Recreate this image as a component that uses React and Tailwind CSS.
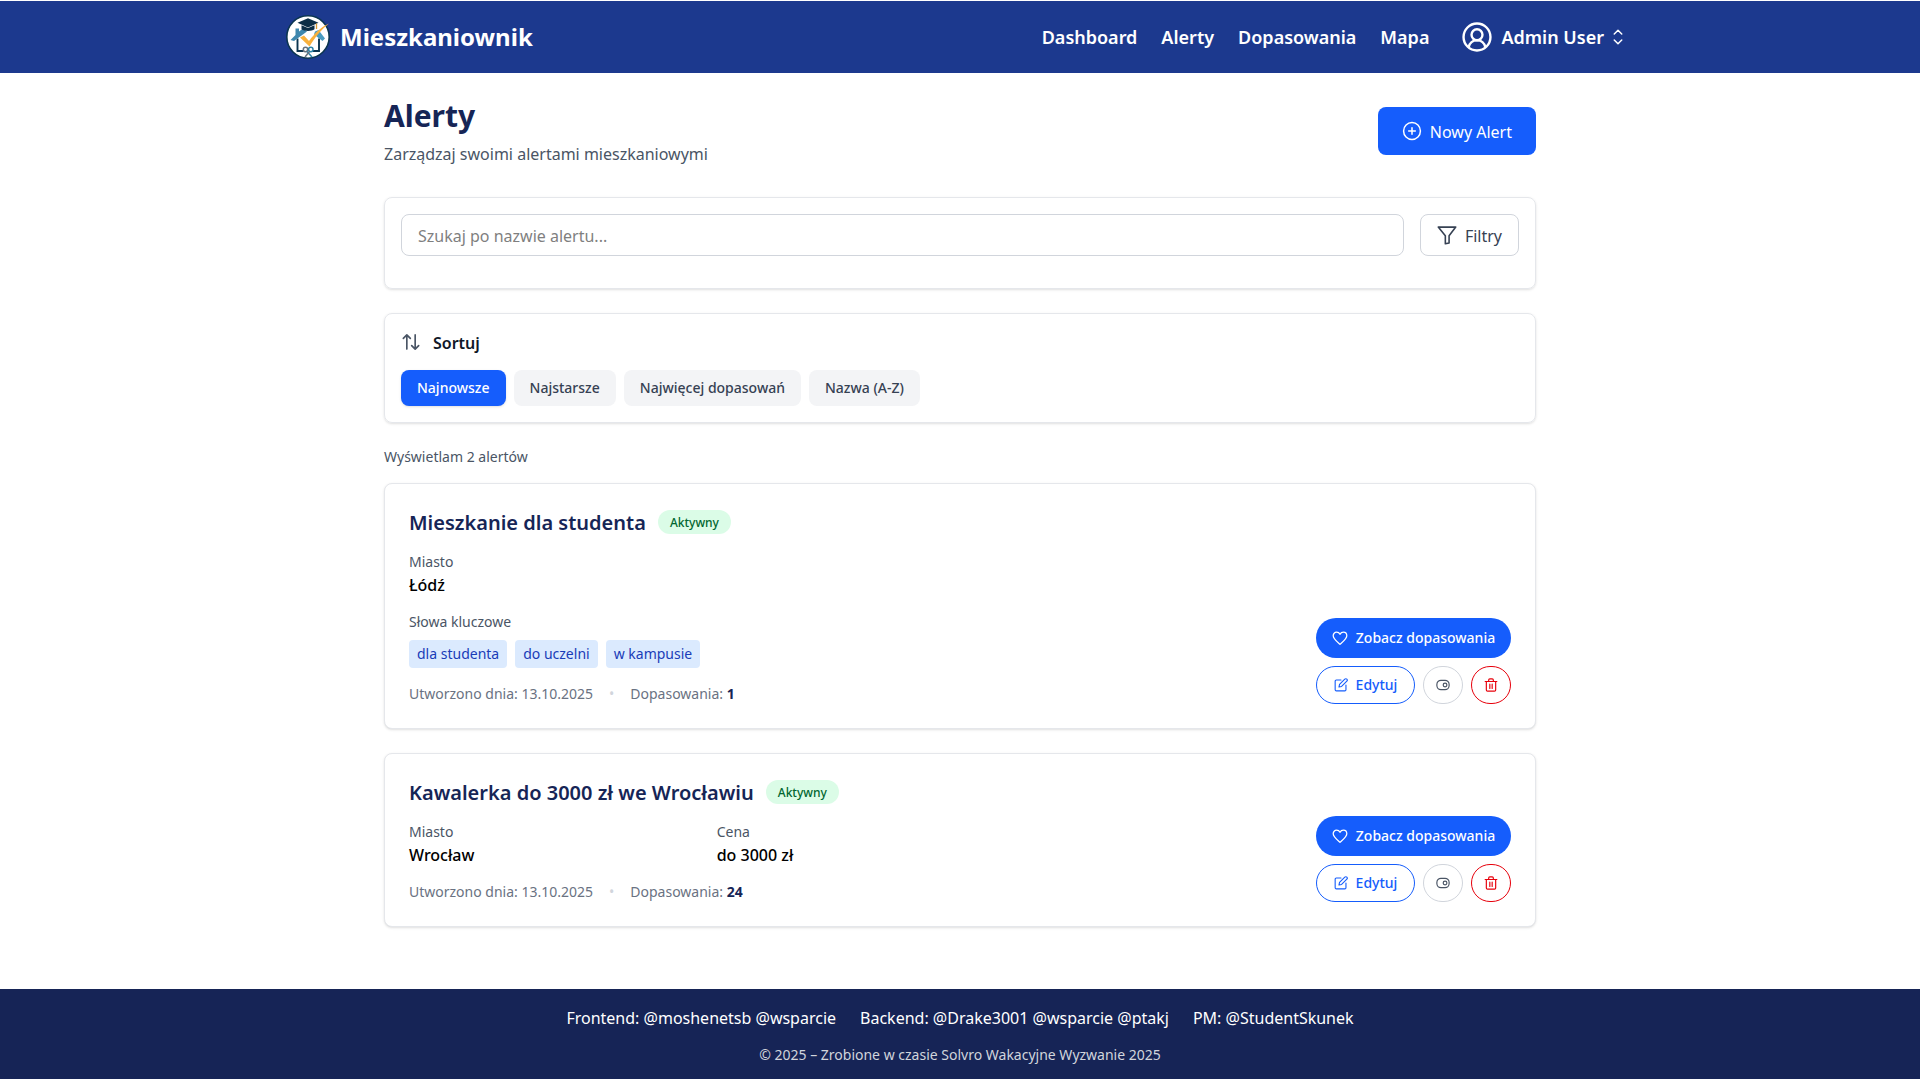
import React from "react";

function Svg({ className, sw = 2, children }) {
  return (
    <svg viewBox="0 0 24 24" fill="none" stroke="currentColor" strokeWidth={sw} strokeLinecap="round" strokeLinejoin="round" className={className}>
      {children}
    </svg>
  );
}

function Logo() {
  return (
    <svg viewBox="0 0 44 44" className="size-11 shrink-0">
      <circle cx="22" cy="22" r="21.200" fill="#fff" stroke="#0b3550" strokeWidth="1.6" />
      <path d="M11.500 23.500v12.500h6M33 23.500v12.500h-6" fill="none" stroke="#0b3550" strokeWidth="1.9" />
      <path d="M9.500 13.500h3.500v3l4-3 4 3L8 26l-3.500-1 5-5z" fill="#3e87ae" />
      <path d="M29 16.500l3.500-1.500 6.500 8.500-2.500 2.500-8.500-6.500z" fill="#4a9cc0" />
      <path d="M22 3.200l10.500 4.600L22 12.500 11.500 7.800z" fill="#0b2e46" />
      <path d="M15.500 10.300v4c3 2.200 10 2.200 13 0v-4L22 13z" fill="#0b2e46" />
      <path d="M30.500 8.500v5.500" stroke="#d99b34" strokeWidth="1.3" />
      <path d="M14 22.500l4-2 5 5.500C29 18 35 12 43 8.500 36 14 29 22 23.500 31.500z" fill="#f9b13c" />
      <g fill="none" strokeWidth="1.500">
        <circle cx="19.500" cy="34.500" r="2.200" stroke="#67717c" />
        <circle cx="24.800" cy="34.500" r="2.200" stroke="#2c83a8" />
        <path d="M21 36.500l5 5.500" stroke="#2c83a8" />
        <path d="M23.500 36.500l-4.500 5.500" stroke="#67717c" />
      </g>
    </svg>
  );
}

function Field({ label, value }) {
  return (
    <div>
      <p className="text-sm text-gray-600">{label}</p>
      <p className="-mb-px pt-px font-medium text-black">{value}</p>
    </div>
  );
}

function AlertCard({ title, fields, keywords, count }) {
  return (
    <article className="flex items-end justify-between rounded-lg border border-gray-200 bg-white p-6 shadow-sm">
      <div className="flex-1">
        <div className="mb-4 flex h-7 items-center gap-3">
          <h2 className="pt-0.5 text-xl font-semibold text-blue-950">{title}</h2>
          <span className="rounded-full bg-green-100 px-3 pt-[5px] pb-[3px] text-xs font-medium text-green-800">Aktywny</span>
        </div>
        <div className="mb-4 grid w-[907px] grid-cols-3 gap-4">
          {fields.map((f) => <Field key={f[0]} label={f[0]} value={f[1]} />)}
        </div>
        {keywords && (
          <div className="mb-4">
            <p className="mb-2 text-sm text-gray-600">Słowa kluczowe</p>
            <div className="flex gap-2">
              {keywords.map((k) => (
                <span key={k} className="rounded bg-blue-100 px-2 py-1 text-sm text-blue-800">{k}</span>
              ))}
            </div>
          </div>
        )}
        <div className="flex items-center gap-4 text-sm text-gray-500">
          <span>Utworzono dnia: 13.10.2025</span>
          <span className="text-gray-300">•</span>
          <span>Dopasowania: <strong className="font-bold text-blue-950">{count}</strong></span>
        </div>
      </div>
      <div className="flex w-[195px] flex-col gap-2">
        <button className="flex h-10 items-center justify-center gap-2 rounded-full bg-[#155dfc] text-sm font-medium text-white">
          <Svg className="size-4" sw={1.9}>
            <path d="M12 21.500C8 18 1.800 13.300 1.800 8.700 1.800 5.700 4 3.300 6.900 3.300c2.100 0 4.100 1.200 5.100 3.200 1-2 3-3.200 5.100-3.200 2.900 0 5.100 2.400 5.100 5.400 0 4.600-6.200 9.300-10.200 12.800z" />
          </Svg>
          Zobacz dopasowania
        </button>
        <div className="flex h-[38px] gap-2">
          <button className="flex flex-1 items-center justify-center gap-2 rounded-full border border-[#155dfc] text-sm font-medium text-[#155dfc]">
            <Svg className="size-3.5" sw={1.9}>
              <path d="M12 3.500H4A2 2 0 0 0 2 5.500v14.500a2 2 0 0 0 2 2h14.500a2 2 0 0 0 2-2V12M8.500 15.500l1-4.500 9-9a2 2 0 0 1 3.500 3.500l-9 9z" />
            </Svg>
            Edytuj
          </button>
          <button aria-label="Przełącz" className="flex w-10 items-center justify-center rounded-full border border-gray-300 text-gray-600">
            <Svg className="size-3.5" sw={2}>
              <rect x="1.500" y="4" width="21" height="16" rx="7" />
              <circle cx="15.500" cy="12" r="3.200" />
            </Svg>
          </button>
          <button aria-label="Usuń" className="flex w-10 items-center justify-center rounded-full border border-[#e7000b] text-[#e7000b]">
            <Svg className="size-3.5" sw={2}>
              <path d="M2 6h20M8 6V3.500A2 2 0 0 1 10 1.500h4a2 2 0 0 1 2 2V6M4 6v14.500A2 2 0 0 0 6 22.500h12a2 2 0 0 0 2-2V6M10 10.500v7.500M14 10.500v7.500" />
            </Svg>
          </button>
        </div>
      </div>
    </article>
  );
}

const sorts = ["Najnowsze", "Najstarsze", "Najwięcej dopasowań", "Nazwa (A-Z)"];

export default function App() {
  return (
    <div className="flex h-[1079px] flex-col overflow-hidden bg-white font-['Noto_Sans',sans-serif] text-black">
      <header className="mt-px h-18 shrink-0 bg-[#1c398e] text-white">
        <div className="mx-auto flex h-full w-[1344px] items-center justify-between pr-0.5">
          <a className="-ml-0.5 flex items-center gap-2.5 text-2xl font-bold">
            <Logo />
            Mieszkaniownik
          </a>
          <nav className="flex items-center gap-6 text-lg font-semibold">
            <a>Dashboard</a>
            <a>Alerty</a>
            <a>Dopasowania</a>
            <a>Mapa</a>
            <button className="ml-2 flex items-center">
              <Svg className="mr-2 size-8" sw={1.800}>
                <circle cx="12" cy="12" r="10.100" />
                <circle cx="12" cy="10.300" r="4.100" />
                <path d="M5.800 19.500c.6-3 3-5.100 6.200-5.100s5.600 2.100 6.200 5.100" />
              </Svg>
              Admin User
              <Svg className="ml-0.5 size-6" sw={1.5}>
                <path d="M8.250 15L12 18.750 15.750 15M8.250 9L12 5.250 15.750 9" />
              </Svg>
            </button>
          </nav>
        </div>
      </header>

      <main className="mx-auto w-[1152px] flex-1 pt-6">
        <div className="mb-8 flex items-center justify-between">
          <div className="-mb-px pt-px">
            <h1 className="mb-2 text-3xl font-bold text-blue-950">Alerty</h1>
            <p className="text-gray-600">Zarządzaj swoimi alertami mieszkaniowymi</p>
          </div>
          <button className="flex h-12 items-center gap-2 rounded-lg bg-[#155dfc] px-6 text-white">
            <Svg className="size-5" sw={1.800}>
              <circle cx="12" cy="12" r="10.100" />
              <path d="M12 8v8M8 12h8" />
            </Svg>
            <span className="pt-0.5">Nowy Alert</span>
          </button>
        </div>

        <section className="mb-6 rounded-lg border border-gray-200 p-4 pb-8 shadow-sm">
          <div className="flex gap-4">
            <input placeholder="Szukaj po nazwie alertu..." className="h-[42px] flex-1 rounded-lg border border-gray-300 px-4 pt-0.5 placeholder:text-[#7f7f7f]" />
            <button className="flex h-[42px] items-center gap-2 rounded-lg border border-gray-300 px-4 text-gray-700">
              <Svg className="size-5" sw={1.900}>
                <path d="M1.500 2.500h21L14.500 13v8.500l-4.500 1V13z" />
              </Svg>
              <span className="pt-0.5">Filtry</span>
            </button>
          </div>
        </section>

        <section className="mb-6 rounded-lg border border-gray-200 p-4 shadow-sm">
          <div className="mb-4 flex h-6 items-center gap-3">
            <Svg className="size-5 text-gray-600">
              <path d="M7 20.500V3.500M2.800 7.700L7 3.500l4.200 4.200M17 3.500v17M12.800 16.300L17 20.500l4.200-4.200" />
            </Svg>
            <h3 className="pt-0.5 font-semibold text-gray-900">Sortuj</h3>
          </div>
          <div className="flex gap-2">
            {sorts.map((s, i) => (
              <button key={s} className={"rounded-lg px-4 py-2 text-sm font-medium " + (i === 0 ? "bg-[#155dfc] text-white shadow-sm" : "bg-gray-100 text-gray-700")}>{s}</button>
            ))}
          </div>
        </section>

        <p className="mb-4 text-sm text-gray-600">Wyświetlam 2 alertów</p>
        <div className="flex flex-col gap-6">
          <AlertCard title="Mieszkanie dla studenta" fields={[["Miasto", "Łódź"]]} keywords={["dla studenta", "do uczelni", "w kampusie"]} count={1} />
          <AlertCard title="Kawalerka do 3000 zł we Wrocławiu" fields={[["Miasto", "Wrocław"], ["Cena", "do 3000 zł"]]} count={24} />
        </div>
      </main>

      <footer className="flex h-[90px] shrink-0 flex-col items-center bg-[#162456] pt-[17px] text-white">
        <div className="flex gap-6">
          <span>Frontend: @moshenetsb @wsparcie</span>
          <span>Backend: @Drake3001 @wsparcie @ptakj</span>
          <span>PM: @StudentSkunek</span>
        </div>
        <p className="mt-[15px] text-sm text-gray-300">© 2025 – Zrobione w czasie Solvro Wakacyjne Wyzwanie 2025</p>
      </footer>
    </div>
  );
}
